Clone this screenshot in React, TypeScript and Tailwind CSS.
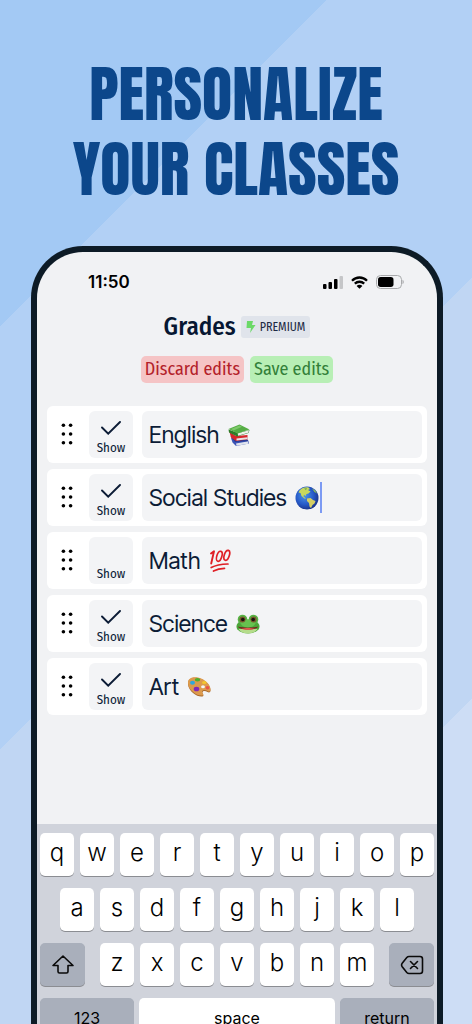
import { useState } from 'react';
import type { ReactNode } from 'react';

interface ClassRow {
  id: string;
  name: string;
  shown: boolean;
  emoji: ReactNode;
  editing?: boolean;
}

function Books() {
  return (
    <svg viewBox="0 0 24 24" className="h-6 w-6 shrink-0" aria-hidden="true">
      <path d="M4 15 L17 16.5 L22 18.5 L22 20.5 L9 23 L5.500 19.500 Z" fill="#3b53b5" />
      <path d="M9 20.500 L21.500 18.200 L21.300 20.700 L9.500 22.700 Z" fill="#dfe3ec" />
      <path d="M3.500 13 L8 19 L21.500 18 L20 16 L8 15 Z" fill="#2a3b93" />
      <path d="M2.500 9 L4 14.500 L9 18 L20.500 16.500 L20.500 12 L9 13 Z" fill="#d7262b" />
      <path d="M9.500 15.600 L20.500 14.300 L20.500 16.300 L9.500 17.600 Z" fill="#e9e4e4" />
      <path d="M1.500 6.500 L2 9.500 L10 13.500 L21.500 10 L22.500 7 L11 10 Z" fill="#2e7d28" />
      <path d="M10.700 10.300 L22 7.200 L21.300 9.800 L11 12.700 Z" fill="#eef0ea" />
      <path d="M1.500 6 L12.500 1.500 L22.500 6.500 L10.700 10.600 Z" fill="#55ad45" />
      <path d="M4 6 L12.500 2.500 L15 3.700 L6.500 7.400 Z" fill="#7cc868" />
    </svg>
  );
}

function Globe() {
  return (
    <svg viewBox="0 0 24 24" className="h-6 w-6 shrink-0" aria-hidden="true">
      <defs>
        <radialGradient id="sea" cx="0.4" cy="0.4" r="0.65">
          <stop offset="0" stopColor="#4b94e8" />
          <stop offset="0.6" stopColor="#2659c7" />
          <stop offset="1" stopColor="#1b3184" />
        </radialGradient>
      </defs>
      <circle cx="12" cy="12" r="11.500" fill="url(#sea)" />
      <path d="M4.500 4.500 C7 2 10 .9 13.500 1.500 L15 3 L13 4 L15.500 5.500 L13.500 7.500 L11.500 8 L10.500 10 L9 8.700 L8.500 10.500 L11 12.500 L9.500 12.500 L6.500 10 L5.500 7 L3.500 6.500 Z" fill="#c9d85e" />
      <path d="M12 12.500 L15.500 12 L18 14 L20.500 15 L19.500 17.500 L17.500 19 L16 22 L14.500 20.500 L14 17 L12 15 Z" fill="#d6cf62" />
      <path d="M17 2.500 C19.500 3.500 21 5.300 22 7.500 L19.500 6 Z" fill="#8fbf5b" />
      <path d="M9 2.500 L12 2 L11 4.200 Z" fill="#6fae53" />
    </svg>
  );
}

function Hundred() {
  return (
    <svg viewBox="0 0 24 24" className="h-6 w-6 shrink-0" aria-hidden="true">
      <g fill="none" stroke="#df1f26" strokeLinecap="round" strokeLinejoin="round">
        <path d="M3 4.500 L6 2.300 L3.200 14.500" strokeWidth="1.900" />
        <ellipse cx="11.300" cy="7.300" rx="2.500" ry="5.200" transform="rotate(18 11.300 7.300)" strokeWidth="1.700" />
        <ellipse cx="18.800" cy="6.300" rx="2.500" ry="5.200" transform="rotate(18 18.800 6.300)" strokeWidth="1.700" />
        <path d="M3.200 18.500 C8 16 13 15.200 20 15" strokeWidth="1.700" />
        <path d="M5.500 22 C9 20.200 12 19.500 16.500 19.300" strokeWidth="1.700" />
      </g>
    </svg>
  );
}

function Frog() {
  return (
    <svg viewBox="0 0 24 24" className="h-6 w-6 shrink-0" aria-hidden="true">
      <ellipse cx="12" cy="14.500" rx="11.500" ry="7" fill="#4ba63a" />
      <path d="M2.500 17 C6 23 18 23 21.500 17 Z" fill="#b5dc8b" />
      <circle cx="6.500" cy="7.500" r="4.800" fill="#56b344" />
      <circle cx="17.500" cy="7.500" r="4.800" fill="#56b344" />
      <ellipse cx="12" cy="11.500" rx="7" ry="4" fill="#66c24f" />
      <circle cx="6.500" cy="7.500" r="3" fill="#795a2d" />
      <circle cx="17.500" cy="7.500" r="3" fill="#795a2d" />
      <circle cx="6.800" cy="7.500" r="1.800" fill="#17150f" />
      <circle cx="17.200" cy="7.500" r="1.800" fill="#17150f" />
      <path d="M1.800 14.500 C6 16 18 16 22.200 14.500 C20 18.500 4 18.500 1.800 14.500 Z" fill="#7d1a1c" />
      <path d="M5.500 16.700 C9 15.800 15 15.800 18.500 16.700 C15 18 9 18 5.500 16.700 Z" fill="#e2574f" />
    </svg>
  );
}

function Palette() {
  return (
    <svg viewBox="0 0 24 24" className="h-6 w-6 shrink-0" aria-hidden="true">
      <path d="M1 9 C.5 3.500 6 2 11 3 C18 4.500 23.500 10 23.500 15.500 C23.500 17.500 22 18 20.500 17 C18.500 15.500 16 15.500 15.500 17 C15 18.500 17.500 20 16 21.300 C12 23 1.500 17.500 1 9 Z" fill="#a8682c" />
      <path d="M1 8.300 C.5 3 6 1.500 11 2.500 C18 4 23.500 9.500 23.500 14.800 C23.500 16.800 22 17 20.500 16 C18.500 14.500 15.500 14.500 15 16.500 C14.700 18 17 19 16 20.300 C12 22 1.500 16.500 1 8.300 Z" fill="#dc9a4d" />
      <ellipse cx="16" cy="11.700" rx="1.900" ry="1.500" fill="#f4f5f7" />
      <ellipse cx="10.500" cy="4.700" rx="2.700" ry="1.700" fill="#4caf2f" />
      <ellipse cx="5.500" cy="7.800" rx="2.500" ry="2" fill="#2fa8dc" />
      <ellipse cx="17.300" cy="7.400" rx="2.200" ry="1.500" fill="#f3c62c" />
      <ellipse cx="9.500" cy="14" rx="2.800" ry="2.300" fill="#8229b5" />
      <ellipse cx="20.500" cy="12.800" rx="1.900" ry="1.800" fill="#ea5349" />
    </svg>
  );
}

const initialRows: ClassRow[] = [
  { id: 'english', name: 'English', shown: true, emoji: <Books /> },
  { id: 'social', name: 'Social Studies', shown: true, emoji: <Globe />, editing: true },
  { id: 'math', name: 'Math', shown: false, emoji: <Hundred /> },
  { id: 'science', name: 'Science', shown: true, emoji: <Frog /> },
  { id: 'art', name: 'Art', shown: true, emoji: <Palette /> },
];

function StatusBar() {
  return (
    <div className="flex h-15 items-center justify-between pl-[51px] pr-[33px]">
      <span className="font-['Inter',sans-serif] text-[17px] leading-5 font-semibold text-black">11:50</span>
      <div className="flex items-center gap-2">
        <svg viewBox="0 0 20 13" className="h-[13px] w-5" aria-hidden="true">
          <rect x="0" y="8" width="3.500" height="5" rx="1" />
          <rect x="5.500" y="6" width="3.500" height="7" rx="1" />
          <rect x="11" y="3" width="3.500" height="10" rx="1" />
          <rect x="16.500" y="0" width="3.500" height="13" rx="1" fill="#c5c6c8" />
        </svg>
        <svg viewBox="0 0 17 13" className="h-[13px] w-[17px]" aria-hidden="true">
          <g fill="none" stroke="#000" strokeWidth="2.300">
            <path d="M1 4.700 C5.200 .4 11.800 .4 16 4.700" />
            <path d="M3.800 7.700 C6.500 5.100 10.500 5.100 13.200 7.700" />
          </g>
          <path d="M8.500 12.800 L5.600 9.900 C7.200 8.500 9.800 8.500 11.400 9.900 Z" />
        </svg>
        <svg viewBox="0 0 28 14" className="h-[14px] w-7" aria-hidden="true">
          <rect x="0.500" y="0.500" width="25" height="13" rx="4" fill="none" stroke="#a9aaac" />
          <rect x="2" y="2" width="15.500" height="10" rx="2.700" />
          <path d="M26.500 4.800 C28.200 5.500 28.200 8.500 26.500 9.200 Z" fill="#a9aaac" />
        </svg>
      </div>
    </div>
  );
}

function DragHandle() {
  return (
    <svg viewBox="0 0 12 22" className="h-[22px] w-3" aria-hidden="true">
      {[2.2, 11, 19.8].map((y) => (
        <g key={y}>
          <circle cx="2.400" cy={y} r="1.800" />
          <circle cx="9.600" cy={y} r="1.800" />
        </g>
      ))}
    </svg>
  );
}

function ClassCard({ row, onToggle, onRename }: { row: ClassRow; onToggle: () => void; onRename: (name: string) => void }) {
  return (
    <li className="flex h-[57px] items-stretch rounded-md bg-white p-[5px]">
      <button type="button" aria-label={`Reorder ${row.name}`} className="flex w-[37px] items-center justify-center pr-2 pb-[2px]">
        <DragHandle />
      </button>
      <label className="relative flex w-11 cursor-pointer flex-col items-center justify-end rounded-md bg-[#f3f4f6] pb-[2px]">
        <input type="checkbox" checked={row.shown} onChange={onToggle} className="peer sr-only" />
        <svg viewBox="0 0 20 14" className="invisible mb-[5px] h-[14px] w-5 peer-checked:visible" aria-hidden="true">
          <path d="M1 6.500 L7.200 12.700 L19 1" fill="none" stroke="#0c1c36" strokeWidth="1.900" strokeLinecap="round" />
        </svg>
        <span className="font-['Fira_Sans_Condensed','Roboto_Condensed',Roboto,sans-serif] text-[13px] leading-4 text-[#0c1c36]">Show</span>
      </label>
      <div className="ml-[9px] flex min-w-0 flex-1 items-center rounded-md bg-[#f3f4f6] pl-[7px]">
        <input
          type="text"
          aria-label="Class name"
          value={row.name}
          onChange={(e) => onRename(e.target.value)}
          className="field-sizing-content mr-2 font-['Inter_Tight','Inter',sans-serif] text-[23px] leading-8 text-[#0c1c36] outline-none"
        />
        {row.emoji}
        {row.editing && <span className="ml-px h-[31px] w-[2px] bg-[#7c9af3]" />}
      </div>
    </li>
  );
}

function Key({ label }: { label: string }) {
  return (
    <button type="button" className="h-[43px] flex-1 rounded-[5px] bg-white pb-1 font-['Inter',sans-serif] text-2xl leading-8 font-[350] text-black shadow-[0_1px_0_#8b8d92]">
      {label}
    </button>
  );
}

function Keyboard() {
  const grey = 'bg-[#a9afbb] shadow-[0_1px_0_#8b8d92]';
  return (
    <div className="flex flex-col gap-3 bg-[#d0d3db] px-[3px] pt-[9px] pb-3">
      <div className="flex gap-[6px]">
        {'qwertyuiop'.split('').map((k) => <Key key={k} label={k} />)}
      </div>
      <div className="flex gap-[6px] px-5">
        {'asdfghjkl'.split('').map((k) => <Key key={k} label={k} />)}
      </div>
      <div className="flex gap-[15px]">
        <button type="button" aria-label="Shift" className={`flex h-[43px] w-[45px] items-center justify-center rounded-[5px] ${grey}`}>
          <svg viewBox="0 0 24 22" className="h-[22px] w-6" aria-hidden="true">
            <path d="M12 2 L22 11.500 H17 V17.500 Q17 19 15.500 19 H8.500 Q7 19 7 17.500 V11.500 H2 Z" fill="none" stroke="#0a0a0a" strokeWidth="1.600" strokeLinejoin="round" />
          </svg>
        </button>
        <div className="flex flex-1 gap-[6px]">
          {'zxcvbnm'.split('').map((k) => <Key key={k} label={k} />)}
        </div>
        <button type="button" aria-label="Delete" className={`flex h-[43px] w-[45px] items-center justify-center rounded-[5px] ${grey}`}>
          <svg viewBox="0 0 24 20" className="h-5 w-6" aria-hidden="true">
            <g fill="none" stroke="#0a0a0a" strokeWidth="1.600" strokeLinecap="round" strokeLinejoin="round">
              <path d="M9 1.500 H20 Q22.500 1.500 22.500 4 V16 Q22.500 18.500 20 18.500 H9 Q7.700 18.500 6.800 17.500 L2 11.500 Q1 10 2 8.500 L6.800 2.500 Q7.700 1.500 9 1.500 Z" />
              <path d="M10.500 6.500 L17.500 13.500 M17.500 6.500 L10.500 13.500" />
            </g>
          </svg>
        </button>
      </div>
      <div className="flex gap-[5px] font-['Inter',sans-serif] text-base leading-5 text-black">
        <button type="button" className={`h-[43px] w-[94px] rounded-[5px] pb-1 ${grey}`}>123</button>
        <button type="button" className="h-[43px] flex-1 rounded-[5px] bg-white pb-1 shadow-[0_1px_0_#8b8d92]">space</button>
        <button type="button" className={`h-[43px] w-[94px] rounded-[5px] pb-1 ${grey}`}>return</button>
      </div>
    </div>
  );
}

export default function App() {
  const [rows, setRows] = useState(initialRows);

  const update = (id: string, patch: Partial<ClassRow>) =>
    setRows((prev) => prev.map((r) => (r.id === id ? { ...r, ...patch } : r)));

  return (
    <main className="flex h-screen flex-col overflow-hidden bg-[linear-gradient(135deg,#a3c9f4_231px,#b2d0f5_231px,#b2d0f5_530px,#c0d6f3_530px,#c0d6f3_828px,#cdddf5_828px)]">
      <h1 className="pt-14 text-center font-['Anton','Roboto_Condensed','Liberation_Sans_Narrow',sans-serif] text-[62px] leading-[75px] font-normal text-[#0c478b] uppercase">
        Personalize
        <br />
        your classes
      </h1>
      <div className="mt-10 mr-[29px] ml-[31px] shrink-0 overflow-hidden rounded-t-[52px] border-x-[6px] border-t-[6px] border-[#0d1b26] bg-[#f1f2f4]">
        <StatusBar />
        <div className="font-['Fira_Sans_Condensed','Roboto_Condensed',Roboto,sans-serif]">
          <div className="flex items-center justify-center gap-[5px] pt-[4px]">
            <h2 className="text-[25px] leading-[22px] font-medium text-[#071732]">Grades</h2>
            <span className="flex h-[22px] items-center gap-1 rounded-[3px] bg-[#e0e4eb] px-[5px] text-xs text-[#1c2a43]">
              <svg viewBox="0 0 10 12" className="h-3 w-[10px]" aria-hidden="true">
                <path d="M1 0 H7 L6 4 H9.500 L4 12 L5 7 H0.500 Z" fill="#6bd968" />
              </svg>
              PREMIUM
            </span>
          </div>
          <div className="mt-[18px] flex justify-center gap-[6px] text-lg leading-[27px]">
            <button type="button" className="rounded-[5px] bg-[#f5c4c5] px-1 text-[#b3212a]">Discard edits</button>
            <button type="button" className="rounded-[5px] bg-[#b8efb5] px-1 text-[#338039]">Save edits</button>
          </div>
        </div>
        <ul className="mt-[23px] mb-[109px] flex flex-col gap-[6px] px-[10px]">
          {rows.map((row) => (
            <ClassCard
              key={row.id}
              row={row}
              onToggle={() => update(row.id, { shown: !row.shown })}
              onRename={(name) => update(row.id, { name })}
            />
          ))}
        </ul>
        <Keyboard />
      </div>
    </main>
  );
}
